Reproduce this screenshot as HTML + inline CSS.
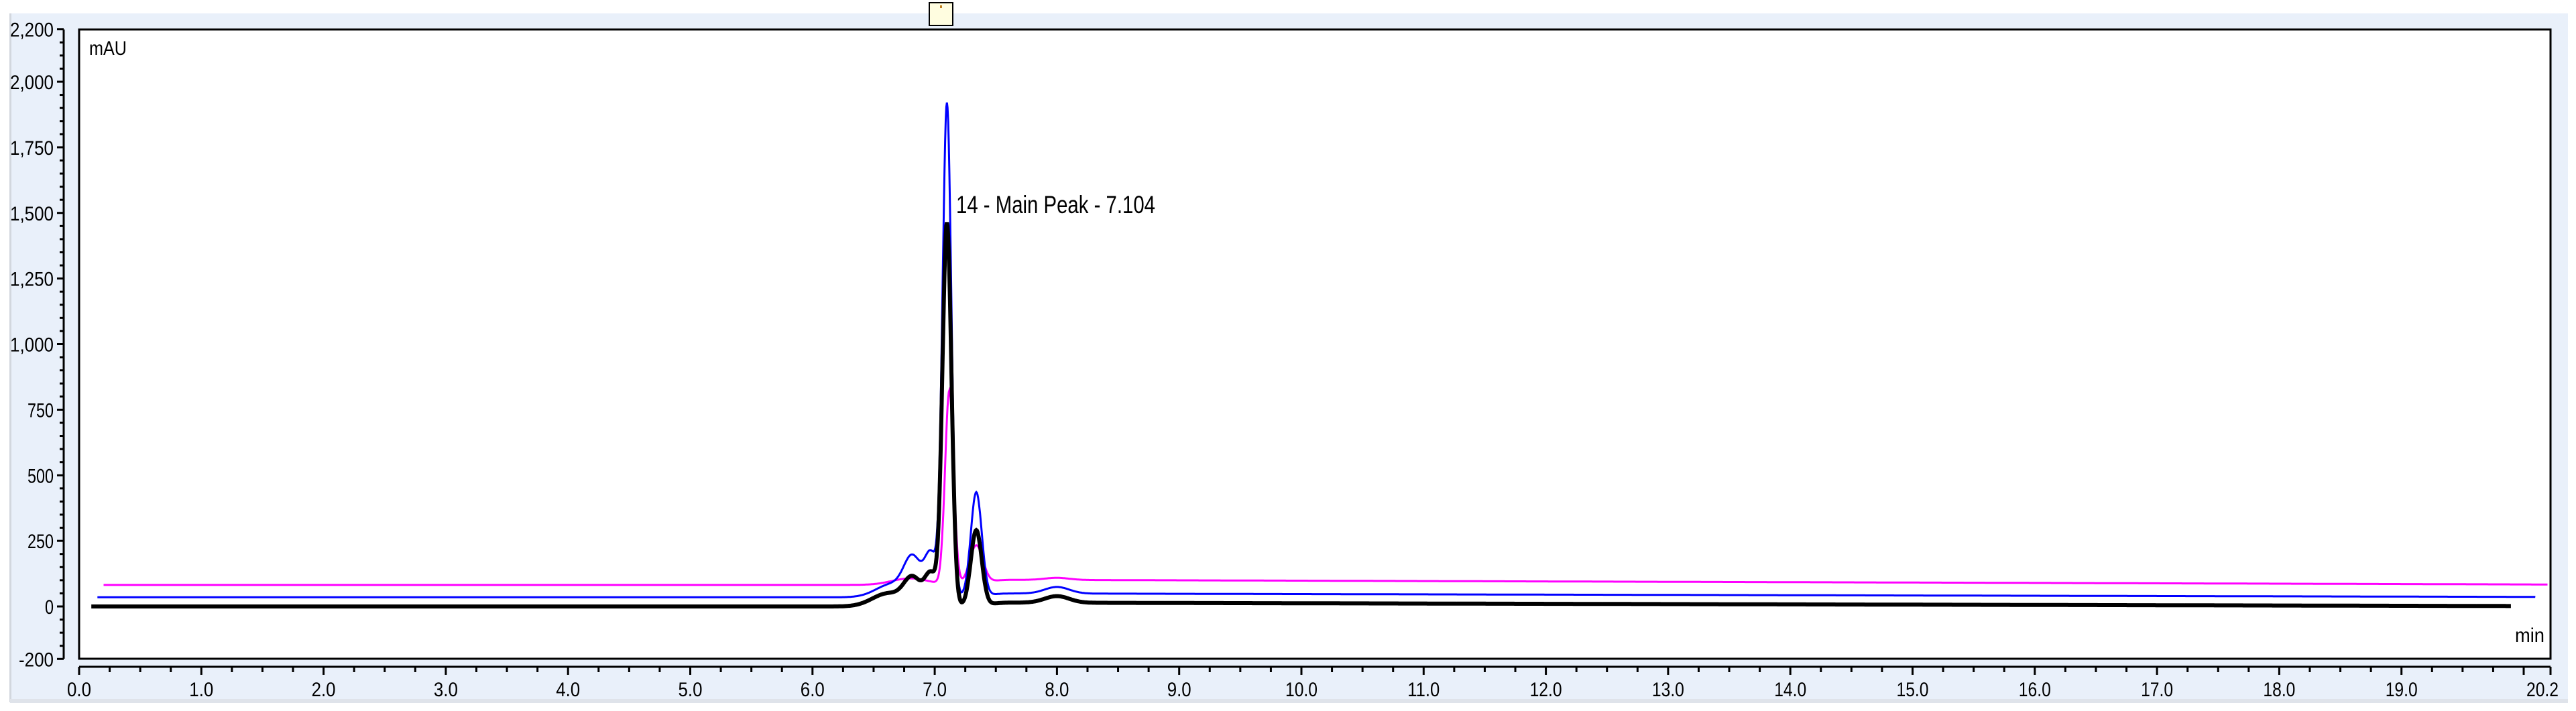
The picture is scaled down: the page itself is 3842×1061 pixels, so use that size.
<!DOCTYPE html>
<html><head><meta charset="utf-8"><style>
html,body{margin:0;padding:0;background:#fff;}
svg{display:block;}
text{font-family:"Liberation Sans",Arial,sans-serif;fill:#000;}
</style></head><body>
<svg id="s" width="3842" height="1061" viewBox="0 0 3842 1061" xmlns="http://www.w3.org/2000/svg">
<rect x="0" y="0" width="3842" height="1061" fill="#fff"/>
<rect x="15" y="20" width="3815" height="1028" fill="#e9f0fa"/>
<rect x="14" y="20" width="3" height="1028" fill="#d2d7de"/>
<rect x="15" y="1043" width="3815" height="6" fill="#dfe3ea"/>
<rect x="118" y="44" width="3686" height="939" fill="#fff" stroke="#000" stroke-width="3"/>
<rect x="1386" y="4" width="35" height="34" fill="#fffde0" stroke="#000" stroke-width="2"/>
<rect x="1402" y="8" width="3" height="4" fill="#c08020"/>
<g id="yax"></g>
<g id="xax"></g>
<text x="133" y="82" font-size="30" textLength="56" lengthAdjust="spacingAndGlyphs">mAU</text>
<text x="3751" y="958" font-size="30" textLength="44" lengthAdjust="spacingAndGlyphs">min</text>
<path id="pm" fill="none" stroke="#ff00ff" stroke-width="3"/>
<path id="pb" fill="none" stroke="#0000ff" stroke-width="3"/>
<path id="pk" fill="none" stroke="#000" stroke-width="6"/>
<text x="1426" y="318" font-size="37" textLength="297" lengthAdjust="spacingAndGlyphs">14 - Main Peak - 7.104</text>
</svg>
<script>
var NS="http://www.w3.org/2000/svg";
function el(p,t,a,txt){var e=document.createElementNS(NS,t);for(var k in a)e.setAttribute(k,a[k]);if(txt!=null)e.textContent=txt;p.appendChild(e);return e;}
var X=function(t){return 118+t*182.3;}, Y=function(v){return 905-v*0.3915;};
var ya=document.getElementById('yax');
el(ya,'line',{x1:95,y1:44,x2:95,y2:983,stroke:'#000','stroke-width':3});
for(var v=-200;v<=2200;v+=50){var maj=(v%250==0)||v==2200||v==-200;
 el(ya,'line',{x1:maj?85:89,y1:Y(v),x2:95,y2:Y(v),stroke:'#000','stroke-width':3});
 if(maj){var s=v<0?'-200':(v>=1000?Math.floor(v/1000)+','+String(v%1000).padStart(3,'0'):String(v));
  var w=s.length*13;
  el(ya,'text',{x:80,y:Y(v)+11,'font-size':30,'text-anchor':'end',textLength:w,lengthAdjust:'spacingAndGlyphs'},s);}}
var xa=document.getElementById('xax');
el(xa,'line',{x1:118,y1:995,x2:3804,y2:995,stroke:'#000','stroke-width':3});
for(var i=0;i<=80;i++){var t=i*0.25;var maj=i%4==0;
 el(xa,'line',{x1:X(t),y1:995,x2:X(t),y2:maj?1007:1003,stroke:'#000','stroke-width':3});
 if(maj&&i<80){var s=t.toFixed(1);el(xa,'text',{x:X(t),y:1039,'font-size':30,'text-anchor':'middle',textLength:s.length*12,lengthAdjust:'spacingAndGlyphs'},s);}}
el(xa,'line',{x1:3804,y1:995,x2:3804,y2:1007,stroke:'#000','stroke-width':3});
el(xa,'text',{x:3792,y:1039,'font-size':30,'text-anchor':'middle',textLength:48,lengthAdjust:'spacingAndGlyphs'},'20.2');
function g(t,c,h,s){return h*Math.exp(-0.5*Math.pow((t-c)/s,2));}
function sig(t,c,w){return 1/(1+Math.exp(-(t-c)/w));}
function mk(id,t0,t1,base,off,peaks){var d='';for(var t=t0;t<=t1;t+=0.005){var v=base+off*sig(t,7.45,0.04)*(1-(t-7.4)/14);
 peaks.forEach(function(p){v+=g(t,p[0],p[1],p[2]);});
 d+=(d?'L':'M')+X(t).toFixed(1)+' '+Y(v).toFixed(1);}
 document.getElementById(id).setAttribute('d',d);}
mk('pm',0.2,20.2,82,20,[[6.8,25,0.15],[7.12,740,0.035],[7.34,150,0.055],[8.0,8,0.1]]);
mk('pb',0.15,20.1,35,15,[[6.65,50,0.13],[6.82,140,0.07],[6.97,160,0.05],[7.1,1880,0.036],[7.34,400,0.045],[8.0,25,0.1]]);
mk('pk',0.1,19.9,0,15,[[6.62,50,0.13],[6.82,100,0.07],[6.97,120,0.05],[7.1,1460,0.037],[7.34,290,0.045],[8.0,25,0.1]]);
</script>
</body></html>
